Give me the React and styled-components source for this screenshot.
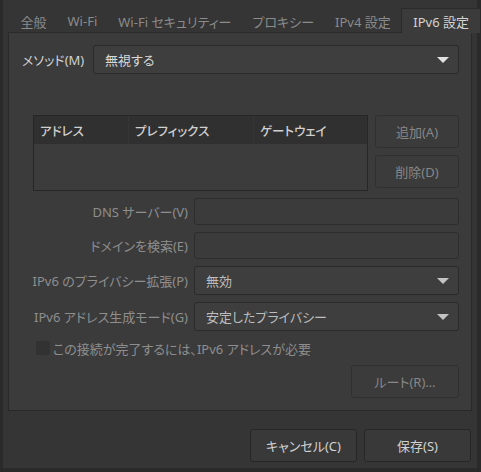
import React from 'react';
import styled, { createGlobalStyle } from 'styled-components';

const GlobalStyle = createGlobalStyle`
	html, body {
		margin: 0;
		padding: 0;
		background: #2a2a2a;
	}
	body {
		font-family: 'Noto Sans', 'Noto Sans CJK JP', sans-serif;
		font-size: 13px;
		font-feature-settings: 'palt';
		-webkit-font-smoothing: antialiased;
	}
`;

const tabs = ['全般', 'Wi-Fi', 'Wi-Fi セキュリティー', 'プロキシー', 'IPv4 設定', 'IPv6 設定'];

const Window = styled.div`
	width: 474px;
	height: 468px;
	margin-left: 3px;
	background: #353535;
	display: flex;
	flex-direction: column;
	box-sizing: border-box;
	padding: 8px 5px 0;
`;

const TabStrip = styled.div`
	display: flex;
	align-items: stretch;
	height: 24px;
	padding-left: 2px;
	position: relative;
	z-index: 1;
`;

const Tab = styled.div`
	display: flex;
	align-items: center;
	padding: 1px ${p => (p.$active ? '11px' : '9.5px')} 0;
	box-sizing: border-box;
	color: ${p => (p.$active ? '#d4d4d4' : '#8b8b8b')};
	white-space: nowrap;
	border: 1px solid ${p => (p.$active ? '#2a2a2a' : 'transparent')};
	border-bottom: none;
	background: ${p => (p.$active ? '#3b3b3b' : 'transparent')};
	margin-left: ${p => (p.$active ? 'auto' : '0')};
	height: ${p => (p.$active ? '25px' : '24px')};
`;

const Panel = styled.div`
	height: 379px;
	box-sizing: border-box;
	border: 1px solid #2a2a2a;
	background: #3b3b3b;
	padding: 12px 12px 12px 13px;
	display: flex;
	flex-direction: column;
`;

const MethodRow = styled.div`
	display: flex;
	align-items: center;
	height: 29px;
`;

const Label = styled.span`
	color: ${p => (p.$dim ? '#8e8e8e' : '#d2d2d2')};
	white-space: nowrap;
	text-align: ${p => (p.$right ? 'right' : 'left')};
	width: ${p => p.$width || 'auto'};
	flex-shrink: 0;
`;

const Combo = styled.div`
	flex: 1;
	height: 29px;
	box-sizing: border-box;
	border: 1px solid #2a2a2a;
	border-radius: 3px;
	background: #3e3e3e;
	display: flex;
	align-items: center;
	justify-content: space-between;
	padding: 0 9px 0 11px;
	color: ${p => (p.$dim ? '#bdbdbd' : '#d8d8d8')};
`;

const Arrow = styled.span`
	width: 0;
	height: 0;
	border-left: 6px solid transparent;
	border-right: 6px solid transparent;
	border-top: 6px solid ${p => (p.$dim ? '#c4c4c4' : '#e2e2e2')};
`;

const AddressSection = styled.div`
	display: flex;
	gap: 7px;
	margin: 41px 0 0 11px;
	height: 76px;
`;

const Table = styled.div`
	flex: 1;
	border: 1px solid #262626;
	background: #3c3c3c;
`;

const TableHead = styled.div`
	display: grid;
	grid-template-columns: 95px 125px 1fr;
	height: 28px;
	background: #303030;
`;

const HeadCell = styled.div`
	display: flex;
	align-items: center;
	padding-left: 6px;
	color: #cfcfcf;
	font-weight: 500;
	font-size: 12.5px;
	border-right: 1px solid ${p => (p.$last ? 'transparent' : '#363636')};
`;

const ButtonColumn = styled.div`
	display: flex;
	flex-direction: column;
	gap: 7px;
	width: 84px;
`;

const Button = styled.div`
	height: 33px;
	width: ${p => p.$width || 'auto'};
	box-sizing: border-box;
	border: 1px solid ${p => (p.$dim ? '#303030' : '#262626')};
	border-radius: 3px;
	background: ${p => (p.$dim ? '#3b3b3b' : '#393939')};
	color: ${p => (p.$dim ? '#878787' : '#d2d2d2')};
	display: flex;
	align-items: center;
	justify-content: center;
	white-space: nowrap;
`;

const FormGrid = styled.div`
	display: grid;
	grid-template-columns: 166px 1fr;
	column-gap: 6px;
	row-gap: 7px;
	margin-top: 7px;
	align-items: center;
`;

const Entry = styled.div`
	height: 27px;
	box-sizing: border-box;
	border: 1px solid #2d2d2d;
	border-radius: 3px;
	background: #3b3b3b;
`;

const CheckRow = styled.div`
	display: flex;
	align-items: center;
	gap: 3px;
	margin: 10px 0 0 14px;
	height: 14px;
	color: #8e8e8e;
`;

const CheckBox = styled.span`
	width: 14px;
	height: 14px;
	border-radius: 2px;
	background: #323232;
	flex-shrink: 0;
`;

const RouteRow = styled.div`
	display: flex;
	justify-content: flex-end;
	margin-top: 10px;
`;

const Footer = styled.div`
	display: flex;
	justify-content: flex-end;
	gap: 7px;
	padding: 18px 1px 0 0;
`;

const App = () => (
	<>
		<GlobalStyle />
		<Window>
			<TabStrip>
				{tabs.map((t, i) => (
					<Tab key={t} $active={i === tabs.length - 1}>
						{t}
					</Tab>
				))}
			</TabStrip>
			<Panel>
				<MethodRow>
					<Label $width="71px">メソッド(M)</Label>
					<Combo>
						無視する
						<Arrow />
					</Combo>
				</MethodRow>
				<AddressSection>
					<Table>
						<TableHead>
							<HeadCell>アドレス</HeadCell>
							<HeadCell>プレフィックス</HeadCell>
							<HeadCell $last>ゲートウェイ</HeadCell>
						</TableHead>
					</Table>
					<ButtonColumn>
						<Button $dim>追加(A)</Button>
						<Button $dim>削除(D)</Button>
					</ButtonColumn>
				</AddressSection>
				<FormGrid>
					<Label $dim $right>DNS サーバー(V)</Label>
					<Entry />
					<Label $dim $right>ドメインを検索(E)</Label>
					<Entry />
					<Label $dim $right>IPv6 のプライバシー拡張(P)</Label>
					<Combo $dim>
						無効
						<Arrow $dim />
					</Combo>
					<Label $dim $right>IPv6 アドレス生成モード(G)</Label>
					<Combo $dim>
						安定したプライバシー
						<Arrow $dim />
					</Combo>
				</FormGrid>
				<CheckRow>
					<CheckBox />
					この接続が完了するには、IPv6 アドレスが必要
				</CheckRow>
				<RouteRow>
					<Button $dim $width="108px">ルート(R)…</Button>
				</RouteRow>
			</Panel>
			<Footer>
				<Button $width="107px">キャンセル(C)</Button>
				<Button $width="107px">保存(S)</Button>
			</Footer>
		</Window>
	</>
);

export default App;
